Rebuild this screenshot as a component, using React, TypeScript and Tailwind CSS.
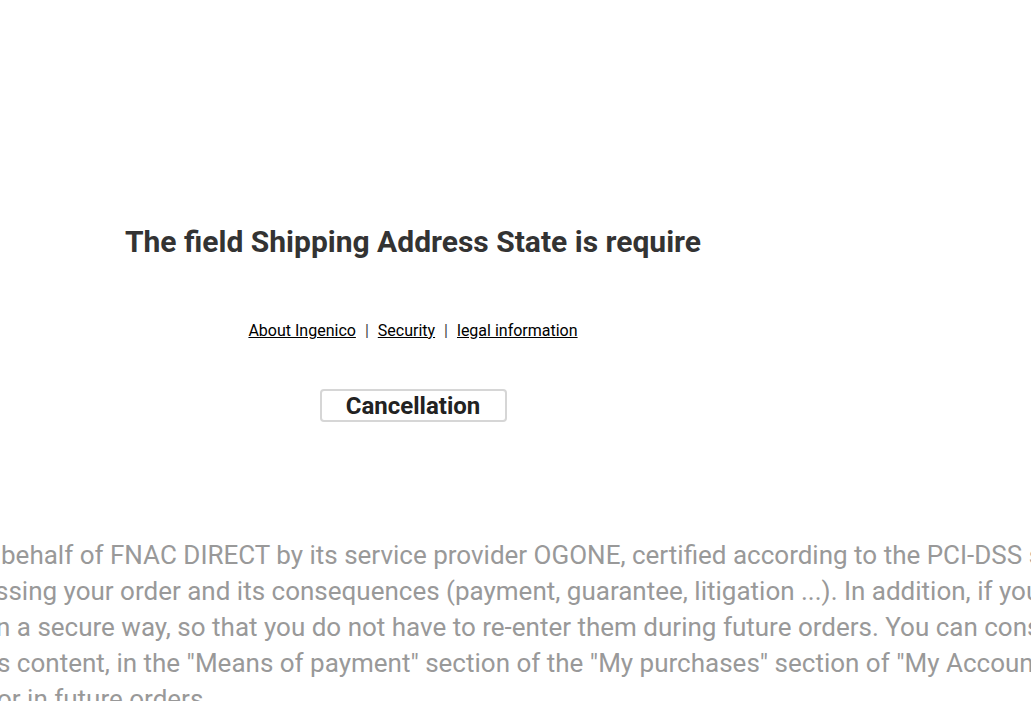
import React from 'react';

const lines = [
  { text: 'behalf of FNAC DIRECT by its service provider OGONE, certified according to the PCI-DSS standard', cls: 'ml-[1px]' },
  { text: 'ssing your order and its consequences (payment, guarantee, litigation ...). In addition, if you wish', cls: 'ml-[-5px]' },
  { text: 'n a secure way, so that you do not have to re-enter them during future orders. You can consult', cls: 'ml-[-4px]' },
  { text: 's content, in the "Means of payment" section of the "My purchases" section of "My Account"', cls: 'ml-[-3px]' },
  { text: 'or in future orders.', cls: 'ml-[-3px]' },
];

export default function App() {
  return (
    <div className="w-[1031px] h-[701px] overflow-hidden bg-white font-['Roboto',sans-serif]">
      <div className="w-[826px] pt-[224px] flex flex-col items-center text-center">
        <h1 className="text-[30px] leading-[36px] font-bold text-[#333333] whitespace-nowrap">
          The field Shipping Address State is require
        </h1>

        <div className="mt-[60px] flex items-center text-[16px] leading-[22px] text-black">
          <a href="#" className="underline">About Ingenico</a>
          <span className="mx-[9px] text-[#444]">|</span>
          <a href="#" className="underline">Security</a>
          <span className="mx-[9px] text-[#444]">|</span>
          <a href="#" className="underline">legal information</a>
        </div>

        <button className="mt-[47px] w-[187px] h-[33px] border-2 border-[#d6d6d6] rounded-[4px] bg-white text-[24px] leading-none font-bold text-[#222]">
          Cancellation
        </button>
      </div>

      <div className="mt-[115px] text-[26px] leading-[36px] text-[#999999] whitespace-nowrap">
        {lines.map((l) => (
          <div key={l.text} className={l.cls}>{l.text}</div>
        ))}
      </div>
    </div>
  );
}
